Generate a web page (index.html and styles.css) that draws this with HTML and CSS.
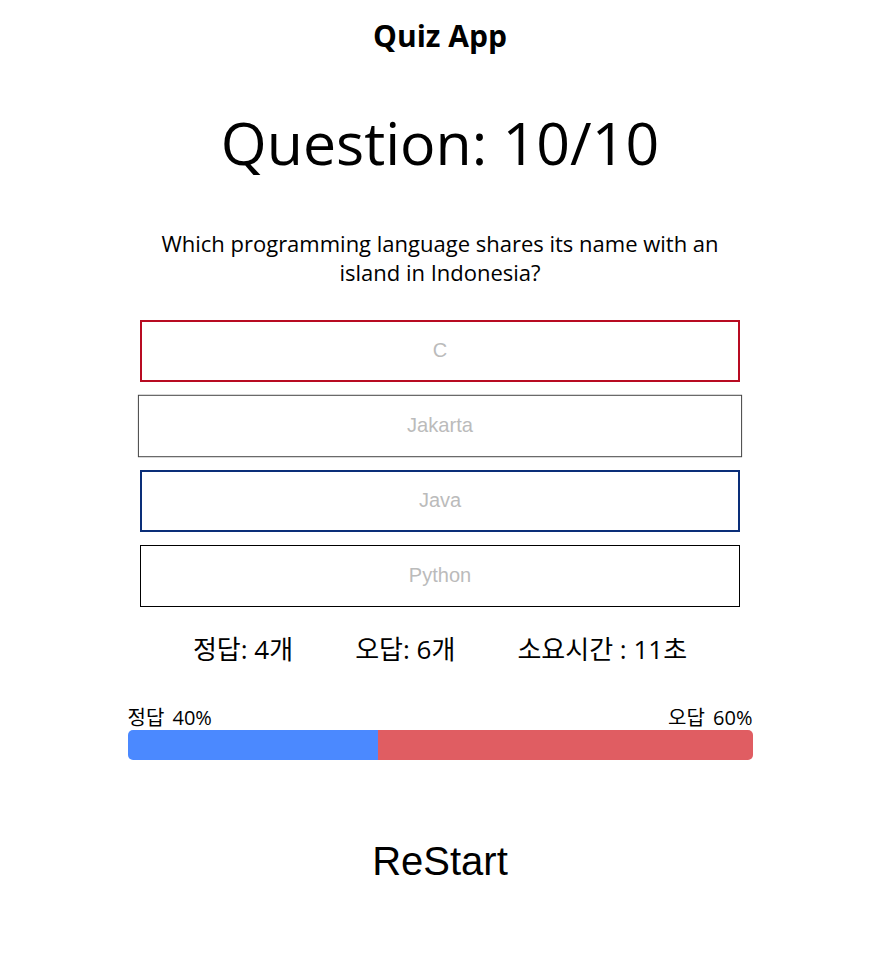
FILE: index.html
```html
<!DOCTYPE html>
<html lang="ko">
<head>
<meta charset="utf-8">
<title>Quiz App</title>
<link rel="stylesheet" href="styles.css">
</head>
<body>
<main class="app">
  <h1 class="title">Quiz App</h1>
  <h2 class="counter">Question: 10/10</h2>
  <p class="question">Which programming language shares its name with an island in Indonesia?</p>
  <div class="options">
    <button class="option wrong">C</button>
    <button class="option hover">Jakarta</button>
    <button class="option right">Java</button>
    <button class="option">Python</button>
  </div>
  <div class="stats">
    <span>정답: 4개</span>
    <span>오답: 6개</span>
    <span>소요시간 : 11초</span>
  </div>
  <div class="chart">
    <div class="chart-labels">
      <span>정답 40%</span>
      <span>오답 60%</span>
    </div>
    <div class="bar">
      <div class="bar-ok" style="width: 40%"></div>
      <div class="bar-bad"></div>
    </div>
  </div>
  <button class="restart">ReStart</button>
</main>
</body>
</html>
```
FILE: styles.css
```css
* { box-sizing: border-box; }
body {
  margin: 0;
  font-family: "Open Sans", "Noto Sans CJK KR", sans-serif;
  color: #000;
  background: #fff;
}
.app {
  width: 880px;
  display: flex;
  flex-direction: column;
  align-items: center;
}
.title {
  margin: 16px 0 0;
  font-size: 30px;
  line-height: 40px;
  font-weight: 700;
}
.counter {
  margin: 42px 0 0;
  font-size: 59px;
  font-weight: 400;
  line-height: 88px;
}
.question {
  margin: 43px 0 0;
  width: 590px;
  text-align: center;
  font-size: 22px;
  line-height: 29px;
}
.options {
  margin-top: 33px;
  display: flex;
  flex-direction: column;
  gap: 13px;
  width: 600px;
}
.option {
  height: 62px;
  background: #fff;
  border: 1px solid #000;
  font-family: "Liberation Sans", Arial, sans-serif;
  font-size: 20px;
  color: #bbbbbb;
  padding: 0 0 2px;
}
.option.wrong { border: 2px solid #b80b22; }
.option.right { border: 2px solid #0a2e78; }
.option.hover { border-color: #444; transform: scale(1.007); }
.stats {
  margin-top: 24px;
  display: flex;
  gap: 62px;
  font-size: 26px;
  line-height: 36px;
}
.chart {
  margin-top: 39px;
  width: 625px;
}
.chart-labels {
  display: flex;
  justify-content: space-between;
  font-size: 20px;
  line-height: 24px;
  word-spacing: 3px;
}
.bar {
  display: flex;
  height: 30px;
  border-radius: 5px;
  overflow: hidden;
}
.bar-ok { background: #4b89ff; }
.bar-bad { flex: 1; background: #e05d62; }
.restart {
  margin-top: 78px;
  background: none;
  border: none;
  padding: 0;
  font-family: "Liberation Sans", Arial, sans-serif;
  font-size: 40px;
  line-height: 46px;
  color: #000;
}
```
